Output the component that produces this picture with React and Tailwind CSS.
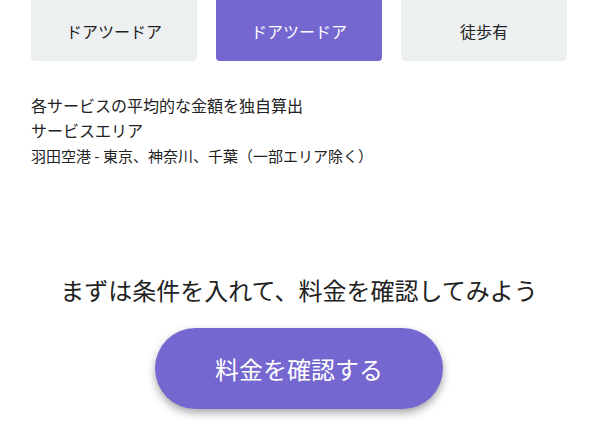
const tabs = [
  { label: "ドアツードア", active: false },
  { label: "ドアツードア", active: true },
  { label: "徒歩有", active: false },
];

export default function App() {
  return (
    <div
      className="w-[598px] h-[427px] bg-white text-[#222] overflow-hidden"
      style={{ fontFamily: '"Noto Sans CJK JP", "Noto Sans", sans-serif' }}
    >
      {/* tabs */}
      <div className="grid grid-cols-3 gap-[19px] px-[31px]">
        {tabs.map((t, i) => (
          <button
            key={i}
            className={`h-[61px] rounded-b-[4px] text-[16px] ${
              t.active ? "bg-[#7467cf] text-white" : "bg-[#edf0f1] text-[#222]"
            }`}
          >
            {t.label}
          </button>
        ))}
      </div>

      {/* info */}
      <div className="px-[31px] pt-[32px] leading-[25px]">
        <p className="text-[16px]">各サービスの平均的な金額を独自算出</p>
        <p className="text-[16px]">サービスエリア</p>
        <p className="text-[15px]">羽田空港 - 東京、神奈川、千葉（一部エリア除く）</p>
      </div>

      {/* cta */}
      <div className="flex flex-col items-center pt-[106px]">
        <p className="text-[24px] leading-[32px]">まずは条件を入れて、料金を確認してみよう</p>
        <button className="mt-[22px] w-[288px] h-[81px] rounded-full bg-[#7467cf] text-white text-[24px] shadow-[0_4px_8px_rgba(0,0,0,0.35)]">
          料金を確認する
        </button>
      </div>
    </div>
  );
}
